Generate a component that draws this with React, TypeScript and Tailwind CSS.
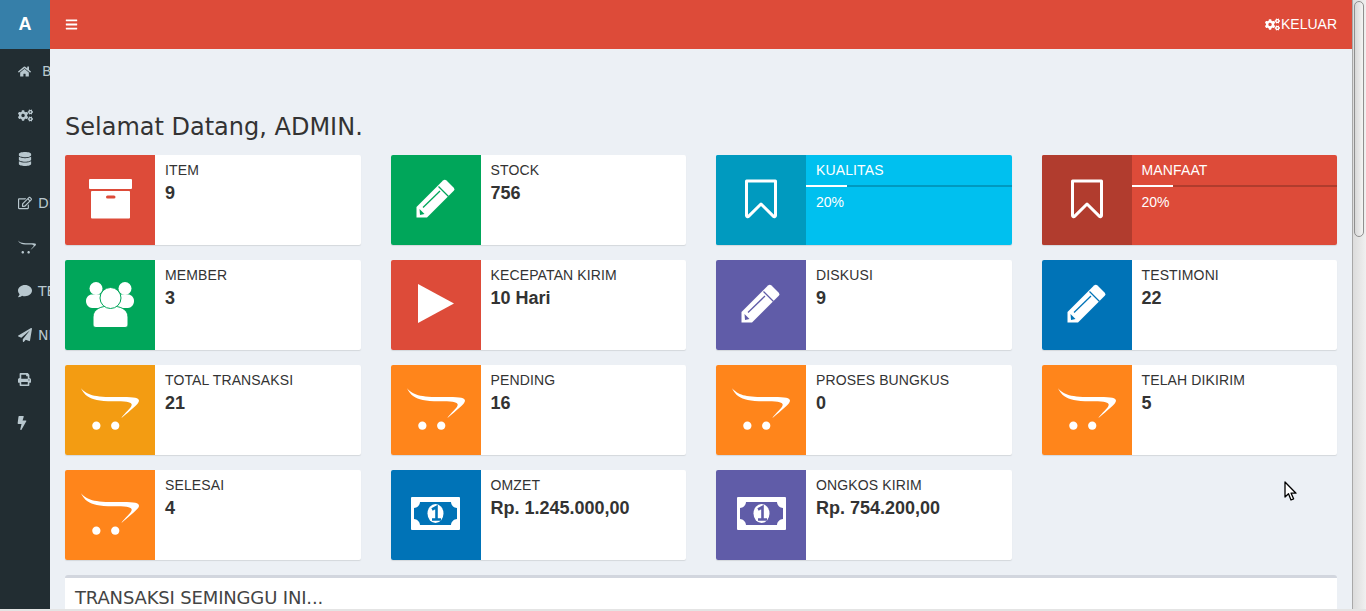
import type { ReactNode } from "react";
import {
  FaBars,
  FaBolt,
  FaCogs,
  FaComment,
  FaDatabase,
  FaHome,
  FaOpencart,
  FaPaperPlane,
  FaPrint,
  FaRegEdit,
} from "react-icons/fa";

const SANS = "font-['Liberation_Sans',Arial,sans-serif]";

function ArchiveIcon() {
  return (
    <svg className="mb-[2px]" width="43" height="40" viewBox="0 0 43 40">
      <rect x="0" y="0" width="43" height="10" rx="1" fill="#fff" />
      <rect x="2" y="12" width="39" height="27.5" rx="1" fill="#fff" />
      <rect x="17" y="16.5" width="9.5" height="3" rx="1.5" fill="#dd4b39" />
    </svg>
  );
}

function PeopleIcon() {
  return (
    <svg className="mb-[1px]" width="50" height="46" viewBox="0 0 50 46">
      <circle cx="11" cy="6.5" r="6.5" fill="#fff" />
      <circle cx="40" cy="6.5" r="6.5" fill="#fff" />
      <path d="M1 19c0-4 3-6.5 6-6.5h36c3 0 6 2.500 6 6.500 0 4-3 7-6 7H7c-3 0-6-3-6-7Z" fill="#fff" />
      <path
        d="M8 42V35C8 27 16 24 25.500 24S43 27 43 35V42a3 3 0 0 1-3 3.500H11a3 3 0 0 1-3-3.500Z"
        fill="#fff"
        stroke="#00a65a"
        strokeWidth="1"
      />
      <circle cx="25.5" cy="16" r="10.5" fill="#fff" stroke="#00a65a" strokeWidth="1" />
    </svg>
  );
}

function PencilIcon({ bg }: { bg: string }) {
  return (
    <svg className="mb-[3px]" width="40" height="39" viewBox="0 0 40 39">
      <path d="M.5 38.500V28L27 1.500a2.500 2.500 0 0 1 3.500 0l7 7a2.500 2.500 0 0 1 0 3.500L11 38.500Z" fill="#fff" />
      <path d="M22.500 7.500 32.500 17.500" stroke={bg} strokeWidth="1.300" />
      <path d="M24 12 7 28.500" stroke={bg} strokeWidth="1.300" />
      <path d="M3.500 30 8.500 35 4 36Z" fill={bg} />
    </svg>
  );
}

function BookmarkIcon() {
  return (
    <svg className="mb-[3px]" width="34" height="40" viewBox="0 0 34 40">
      <path
        d="M2.500 2h29v34.500a1.200 1.200 0 0 1-2 .9L17 25 4.500 37.400a1.200 1.200 0 0 1-2-.9Z"
        fill="none"
        stroke="#fff"
        strokeWidth="3"
        strokeLinejoin="round"
      />
    </svg>
  );
}

function PlayIcon() {
  return (
    <svg className="mb-[3px]" width="36" height="39" viewBox="0 0 36 39">
      <path d="M0 0 36 19.500 0 39Z" fill="#fff" />
    </svg>
  );
}

function MoneyIcon({ bg }: { bg: string }) {
  return (
    <svg className="mb-[3px]" width="49" height="33" viewBox="0 0 49 33">
      <rect width="49" height="33" rx="1" fill="#fff" />
      <path d="M9 5h31c0 3 3 6 6 6v11c-3 0-6 3-6 6H9c0-3-3-6-6-6V11c3 0 6-3 6-6Z" fill={bg} />
      <ellipse cx="24.5" cy="16.5" rx="8" ry="9.5" fill="#fff" />
      <path d="M21 12.500 25.500 10v12M21 22.500h9" fill="none" stroke={bg} strokeWidth="2.600" />
    </svg>
  );
}

const cart = <FaOpencart className="mb-[2px] text-[58px] text-white" />;

type Stat = { label: string; value: string; iconBg: string; icon: ReactNode };

const STATS: Stat[] = [
  { label: "ITEM", value: "9", iconBg: "bg-[#dd4b39]", icon: <ArchiveIcon /> },
  { label: "STOCK", value: "756", iconBg: "bg-[#00a65a]", icon: <PencilIcon bg="#00a65a" /> },
  { label: "KUALITAS", value: "20%", iconBg: "", icon: null },
  { label: "MANFAAT", value: "20%", iconBg: "", icon: null },
  { label: "MEMBER", value: "3", iconBg: "bg-[#00a65a]", icon: <PeopleIcon /> },
  { label: "KECEPATAN KIRIM", value: "10 Hari", iconBg: "bg-[#dd4b39]", icon: <PlayIcon /> },
  { label: "DISKUSI", value: "9", iconBg: "bg-[#605ca8]", icon: <PencilIcon bg="#605ca8" /> },
  { label: "TESTIMONI", value: "22", iconBg: "bg-[#0073b7]", icon: <PencilIcon bg="#0073b7" /> },
  { label: "TOTAL TRANSAKSI", value: "21", iconBg: "bg-[#f39c12]", icon: cart },
  { label: "PENDING", value: "16", iconBg: "bg-[#ff851b]", icon: cart },
  { label: "PROSES BUNGKUS", value: "0", iconBg: "bg-[#ff851b]", icon: cart },
  { label: "TELAH DIKIRIM", value: "5", iconBg: "bg-[#ff851b]", icon: cart },
  { label: "SELESAI", value: "4", iconBg: "bg-[#ff851b]", icon: cart },
  { label: "OMZET", value: "Rp. 1.245.000,00", iconBg: "bg-[#0073b7]", icon: <MoneyIcon bg="#0073b7" /> },
  { label: "ONGKOS KIRIM", value: "Rp. 754.200,00", iconBg: "bg-[#605ca8]", icon: <MoneyIcon bg="#605ca8" /> },
];

const MENU: { icon: ReactNode; text: string; gap: string }[] = [
  { icon: <FaHome className="text-[13px]" />, text: "BERANDA", gap: "ml-[11px]" },
  { icon: <FaCogs className="text-[15px]" />, text: "", gap: "" },
  { icon: <FaDatabase className="text-[14px]" />, text: "", gap: "" },
  { icon: <FaRegEdit className="text-[14px]" />, text: "DISKON", gap: "ml-[6px]" },
  { icon: <FaOpencart className="text-[18px]" />, text: "", gap: "" },
  { icon: <FaComment className="text-[14px]" />, text: "TESTIMONI", gap: "ml-[6px]" },
  { icon: <FaPaperPlane className="text-[14px]" />, text: "NEWS", gap: "ml-[6px]" },
  { icon: <FaPrint className="text-[13px]" />, text: "", gap: "" },
  { icon: <FaBolt className="-ml-[3px] text-[14px]" />, text: "", gap: "" },
];

function StatCard({ stat }: { stat: Stat }) {
  return (
    <div className="flex h-[90px] overflow-hidden rounded-[2px] bg-white shadow-[0_1px_1px_rgba(0,0,0,0.1)]">
      <div className={`flex w-[90px] shrink-0 items-center justify-center ${stat.iconBg}`}>{stat.icon}</div>
      <div className={`px-[10px] py-[5px] text-[#333] ${SANS}`}>
        <div className="text-[14px] leading-[20px] tracking-[0.13px]">{stat.label}</div>
        <div className="text-[18px] font-bold leading-[26px]">{stat.value}</div>
      </div>
    </div>
  );
}

function ProgressCard({ label, value, bg, iconBg }: { label: string; value: string; bg: string; iconBg: string }) {
  return (
    <div className={`flex h-[90px] overflow-hidden rounded-[2px] shadow-[0_1px_1px_rgba(0,0,0,0.1)] ${bg}`}>
      <div className={`flex w-[90px] shrink-0 items-center justify-center ${iconBg}`}>
        <BookmarkIcon />
      </div>
      <div className={`flex-1 py-[5px] text-white ${SANS}`}>
        <div className="px-[10px] text-[14px] leading-[20px] tracking-[0.13px]">{label}</div>
        <div className="my-[5px] h-[2px] bg-black/20">
          <div className="h-full bg-white" style={{ width: value }} />
        </div>
        <div className="px-[10px] text-[14px] leading-[20px]">{value}</div>
      </div>
    </div>
  );
}

export default function App() {
  return (
    <div className="relative flex h-[611px] w-[1366px] overflow-hidden bg-[#ecf0f5]">
      {/* SIDEBAR */}
      <aside className="w-[50px] shrink-0 bg-[#222d32]">
        <div className={`flex h-[49px] items-center justify-center bg-[#367fa9] text-[18px] font-bold text-white ${SANS}`}>
          A
        </div>
        <nav className="overflow-hidden">
          {MENU.map((m, i) => (
            <div key={i} className="flex h-[44px] w-[50px] items-center overflow-hidden whitespace-nowrap pl-[18px] text-[#b8c7ce]">
              <span className="flex shrink-0 items-center">{m.icon}</span>
              <span className={`font-['DejaVu_Sans',sans-serif] text-[14px] ${m.gap}`}>{m.text}</span>
            </div>
          ))}
        </nav>
      </aside>

      {/* MAIN */}
      <main className="flex min-w-0 flex-1 flex-col">
        <header className="flex h-[49px] shrink-0 items-center justify-between bg-[#dd4b39] px-[15px] text-white">
          <FaBars className="text-[13px]" />
          <div className={`flex items-center text-[14px] ${SANS}`}>
            <FaCogs className="mr-[1px] text-[15px]" />
            <span>KELUAR</span>
          </div>
        </header>
        <div className="flex-1 px-[15px] pt-[65px]">
          <h1 className="mb-[15px] font-['DejaVu_Sans',sans-serif] text-[24px] leading-[26px] text-[#333]">
            Selamat Datang, ADMIN.
          </h1>
          <div className="grid grid-cols-4 gap-x-[30px] gap-y-[15px]">
            {STATS.map((s) =>
              s.label === "KUALITAS" ? (
                <ProgressCard key={s.label} label={s.label} value={s.value} bg="bg-[#00c0ef]" iconBg="bg-[#009abf]" />
              ) : s.label === "MANFAAT" ? (
                <ProgressCard key={s.label} label={s.label} value={s.value} bg="bg-[#dd4b39]" iconBg="bg-[#b13c2e]" />
              ) : (
                <StatCard key={s.label} stat={s} />
              ),
            )}
          </div>
          <section className="mt-[15px] h-[60px] rounded-t-[3px] border-t-[3px] border-[#d2d6de] bg-white px-[10px] pt-[10px]">
            <h3 className="font-['DejaVu_Sans',sans-serif] text-[18px] leading-[20px] tracking-[-0.16px] text-[#444]">
              TRANSAKSI SEMINGGU INI...
            </h3>
          </section>
        </div>
      </main>

      {/* SCROLLBAR */}
      <div className="w-[14px] shrink-0 border-l border-[#a8a8a8] bg-gradient-to-r from-[#dcdcdc] to-[#f0f0f0] pl-[1px] pt-[1px]">
        <div className="h-[236px] w-[10px] rounded-[5px] border border-[#8f8f8f] bg-gradient-to-r from-[#d8d8d8] to-[#f4f4f4]" />
      </div>

      {/* window edge and pointer, both lie over the page */}
      <div className="absolute bottom-0 left-0 h-[2px] w-full bg-[#e4e4e4]" />
      <svg className="absolute left-[1284px] top-[481px]" width="14" height="21" viewBox="0 0 14 21">
        <path d="M1 1v15l3.5-3.2L7 19l2.6-1.2-2.5-5.600H12Z" fill="#fff" stroke="#000" strokeWidth="1.3" strokeLinejoin="round" />
      </svg>
    </div>
  );
}
